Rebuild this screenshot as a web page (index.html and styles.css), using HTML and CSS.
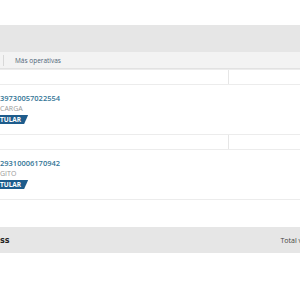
FILE: index.html
```html
<!DOCTYPE html>
<html lang="es">
<head>
    <meta charset="UTF-8">
    <meta name="viewport" content="width=device-width, initial-scale=1.0">
    <title>Tarjetas</title>
    <link rel="stylesheet" href="styles.css">
</head>
<body>
    <div class="page">
        <div class="title-band"></div>

        <div class="tabs">
            <span class="tab-sep"></span>
            <span class="tab">Más operativas</span>
        </div>

        <div class="list">
            <div class="list-head">
                <div class="cell"></div>
                <div class="cell"></div>
            </div>

            <div class="card">
                <div class="card-number">39730057022554</div>
                <div class="card-type">CARGA</div>
                <div class="badge">TULAR</div>
            </div>

            <div class="list-head">
                <div class="cell"></div>
                <div class="cell"></div>
            </div>

            <div class="card">
                <div class="card-number">29310006170942</div>
                <div class="card-type">GITO</div>
                <div class="badge">TULAR</div>
            </div>
        </div>

        <div class="totals">
            <span class="totals-label">ss</span>
            <span class="totals-value">Total v</span>
        </div>
    </div>
</body>
</html>
```

FILE: styles.css
```css
body {
    margin: 0;
    background-color: #fff;
    font-family: "Open Sans", "Liberation Sans", sans-serif;
    overflow: hidden;
  }

  .page {
    padding-top: 25px;
  }

  .title-band {
    height: 27px;
    background-color: #e6e6e6;
  }

  .tabs {
    height: 16px;
    display: flex;
    align-items: center;
    background-color: #f3f3f3;
    border-bottom: 1px solid #e2e2e2;
  }

  .tab-sep {
    width: 1px;
    height: 11px;
    margin-left: 3px;
    background-color: #d8d8d8;
  }

  .tab {
    margin-left: 11px;
    font-size: 6.5px;
    color: #4f6577;
  }

  .list {
    border-bottom: 1px solid #ececec;
  }

  .list-head {
    display: grid;
    grid-template-columns: 229px 1fr;
    height: 14px;
    border-top: 1px solid #ececec;
    border-bottom: 1px solid #ececec;
  }

  .list-head .cell:first-child {
    border-right: 1px solid #e6e6e6;
  }

  .card {
    padding: 8px 0 10px 0;
  }

  .card-number {
    font-size: 7.5px;
    font-weight: 600;
    color: #337596;
    line-height: 11px;
  }

  .card-type {
    font-size: 7px;
    color: #999;
    line-height: 10px;
  }

  .badge {
    width: fit-content;
    margin-top: 1px;
    padding: 1px 7px 1px 0;
    font-size: 6.5px;
    font-weight: 700;
    line-height: 7px;
    color: #fff;
    background-color: #1e5c8c;
    clip-path: polygon(0 0, 100% 0, calc(100% - 4px) 100%, 0 100%);
  }

  .totals {
    margin-top: 27px;
    height: 26px;
    display: flex;
    align-items: center;
    justify-content: space-between;
    background-color: #e6e6e6;
    white-space: nowrap;
  }

  .totals-label {
    font-family: "DejaVu Sans", sans-serif;
    font-size: 8px;
    font-weight: 700;
    color: #222;
  }

  .totals-value {
    margin-right: -2px;
    font-size: 7px;
    color: #444;
  }
```
